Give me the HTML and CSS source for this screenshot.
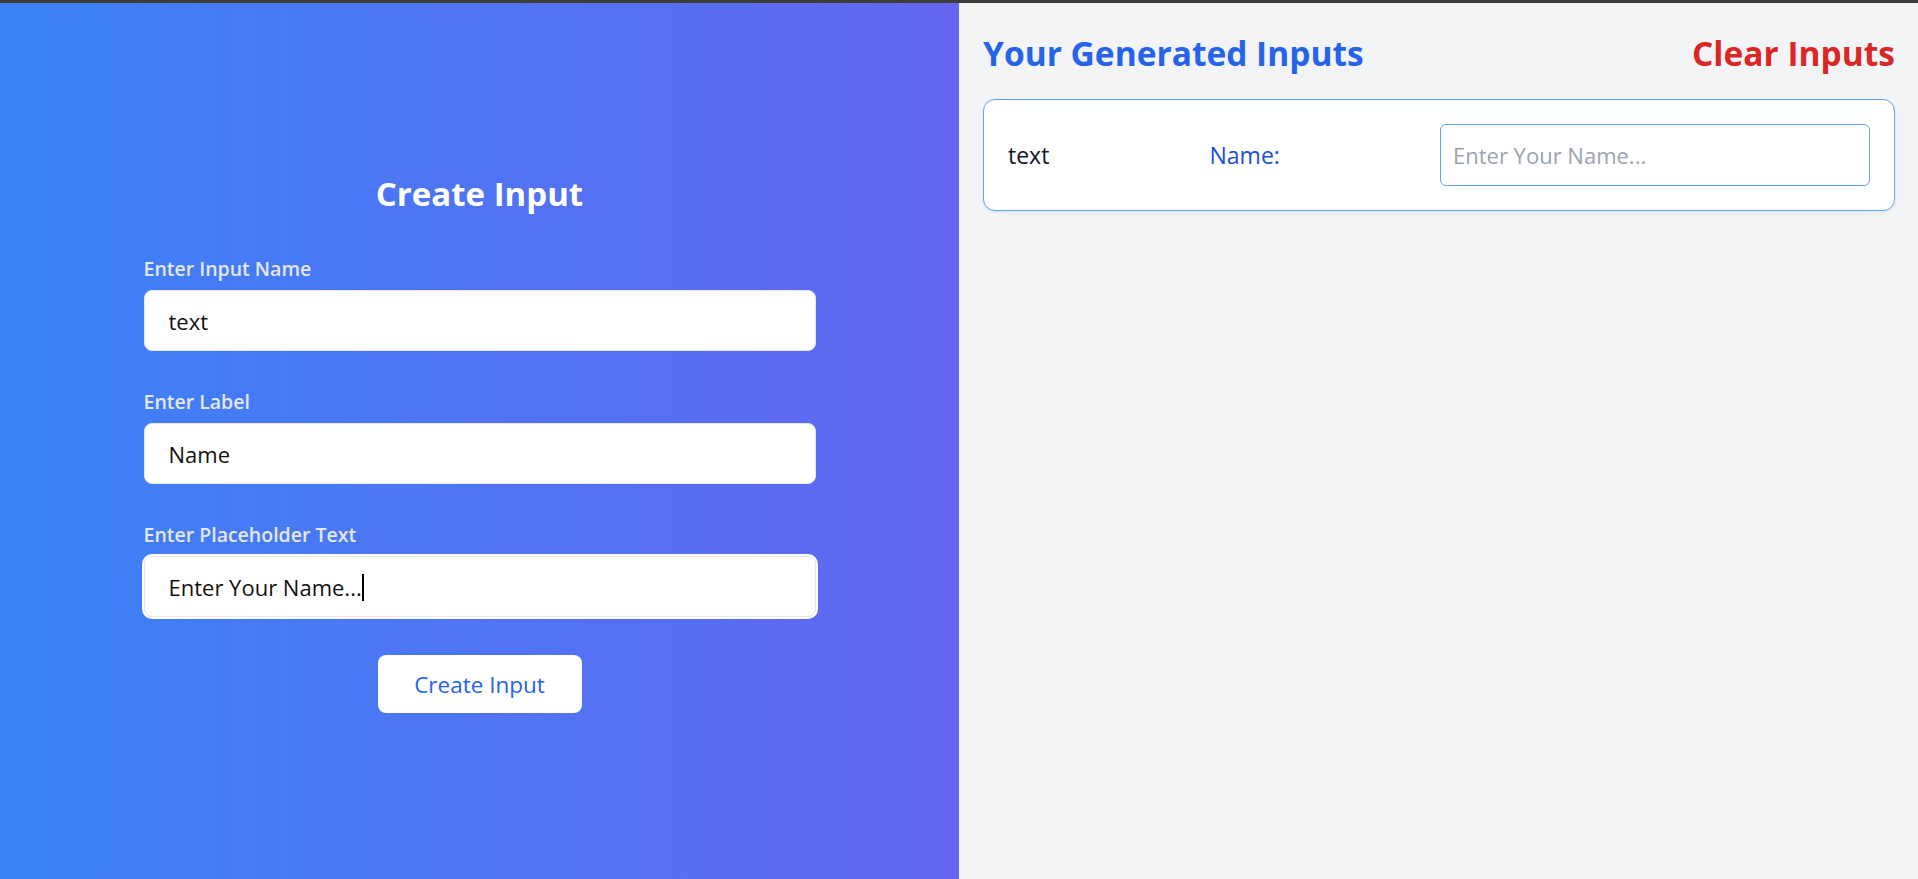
FILE: index.html
```html
<!DOCTYPE html>
<html lang="en">
<head>
<meta charset="utf-8">
<title>Input Generator</title>
<link rel="stylesheet" href="styles.css">
</head>
<body>
<div class="app">
  <section class="left">
    <form class="builder">
      <h1 class="builder-title">Create Input</h1>
      <div class="field">
        <label class="field-label" for="iname">Enter Input Name</label>
        <input class="field-input" id="iname" type="text" value="text">
      </div>
      <div class="field">
        <label class="field-label" for="ilabel">Enter Label</label>
        <input class="field-input" id="ilabel" type="text" value="Name">
      </div>
      <div class="field field-last">
        <label class="field-label" for="iph">Enter Placeholder Text</label>
        <div class="input-wrap">
          <input class="field-input is-focused" id="iph" type="text" value="Enter Your Name...">
          <span class="caret"></span>
        </div>
      </div>
      <button class="create-btn" type="button">Create Input</button>
    </form>
  </section>
  <section class="right">
    <header class="right-head">
      <h2 class="right-title">Your Generated Inputs</h2>
      <button class="clear-btn" type="button">Clear Inputs</button>
    </header>
    <div class="gen-card">
      <span class="gen-name">text</span>
      <label class="gen-label" for="gen1">Name:</label>
      <input class="gen-input" id="gen1" type="text" placeholder="Enter Your Name...">
    </div>
  </section>
</div>
</body>
</html>
```

FILE: styles.css
```css
* { box-sizing: border-box; }
html, body { margin: 0; padding: 0; }
body {
  font-family: "Open Sans", "Noto Sans", sans-serif;
  background: #f3f4f6;
}
.app {
  display: flex;
  height: 879px;
  border-top: 3px solid #3d3d3d;
}
.left {
  flex: 0 0 959px;
  background: linear-gradient(to right, #3b82f6, #6366f1);
  display: flex;
  justify-content: center;
  align-items: flex-start;
  padding-top: 169px;
}
.builder {
  width: 672px;
  display: flex;
  flex-direction: column;
}
.builder-title {
  margin: 0 0 40px;
  text-align: center;
  color: #fff;
  font-size: 33px;
  font-weight: 700;
  line-height: 44px;
}
.field {
  display: flex;
  flex-direction: column;
  margin-bottom: 38px;
}
.field-last { margin-bottom: 38px; }
.field-label {
  color: #e5e7eb;
  font-size: 19.5px;
  font-weight: 600;
  line-height: 26px;
  margin-bottom: 8px;
}
.input-wrap {
  position: relative;
  display: flex;
  flex-direction: column;
}
.field-input {
  height: 61px;
  border: 1px solid #e5e7eb;
  border-radius: 8px;
  background: #fff;
  padding: 0 24px;
  font-family: inherit;
  font-size: 22px;
  color: #111;
  outline: none;
}
.field-input.is-focused {
  box-shadow: 0 0 0 2px #fff;
}
.caret {
  position: absolute;
  left: 218px;
  top: 18px;
  width: 2px;
  height: 27px;
  background: #000;
}
.create-btn {
  align-self: center;
  width: 204px;
  height: 58px;
  border: none;
  border-radius: 8px;
  background: #fff;
  color: #2563eb;
  font-family: inherit;
  font-size: 22.5px;
  font-weight: 400;
  cursor: pointer;
}
.right {
  flex: 1;
  background: #f3f4f6;
  padding: 28px 23px 0 24px;
}
.right-head {
  display: flex;
  justify-content: space-between;
  align-items: center;
  margin-bottom: 24px;
}
.right-title {
  margin: 0;
  color: #2563eb;
  font-size: 33.5px;
  font-weight: 700;
  line-height: 44px;
}
.clear-btn {
  border: none;
  background: none;
  padding: 0;
  color: #dc2626;
  font-family: inherit;
  font-size: 33.5px;
  font-weight: 700;
  line-height: 44px;
  cursor: pointer;
}
.gen-card {
  height: 112px;
  display: flex;
  align-items: center;
  justify-content: space-between;
  padding: 0 24px;
  background: #fff;
  border: 1px solid #60a5fa;
  border-radius: 12px;
  box-shadow: 0 1px 3px rgba(0,0,0,0.08);
}
.gen-name {
  color: #111827;
  font-size: 23px;
  font-weight: 500;
}
.gen-label {
  color: #1d4ed8;
  font-size: 23px;
  font-weight: 500;
}
.gen-input {
  width: 430px;
  height: 62px;
  border: 1px solid #60a5fa;
  border-radius: 6px;
  padding: 0 12px;
  font-family: inherit;
  font-size: 22px;
  color: #111;
  outline: none;
}
.gen-input::placeholder { color: #9ca3af; }
```
